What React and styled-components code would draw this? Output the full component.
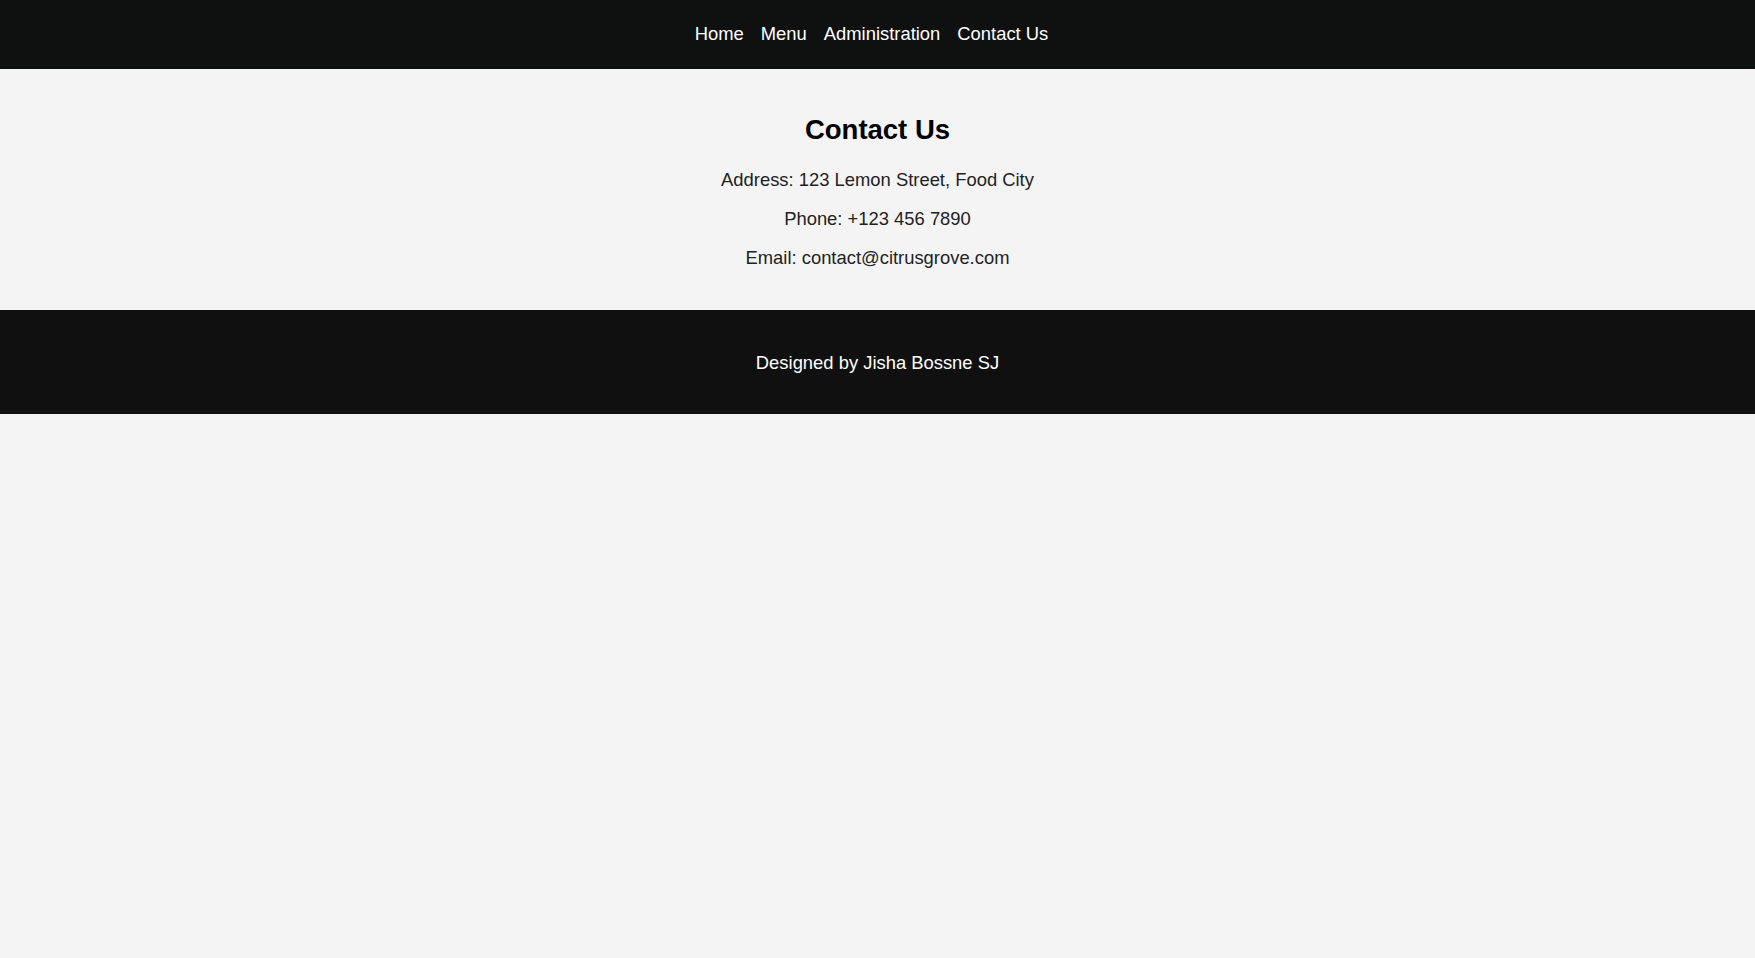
import React from 'react';
import styled, { createGlobalStyle } from 'styled-components';

const GlobalStyle = createGlobalStyle`
  html, body {
    margin: 0;
    padding: 0;
    background: #f4f4f4;
    font-family: "Liberation Sans", Arial, sans-serif;
    font-size: 18.4px;
    line-height: 21px;
  }
`;

const Navbar = styled.nav`
  background: #0f1111;
  padding: 23px 12px 25px 0;
  display: flex;
  justify-content: center;
  gap: 17px;
`;

const NavLink = styled.a`
  color: #ffffff;
  text-decoration: none;
`;

const ContactSection = styled.section`
  padding: 22px 20px 24px;
  text-align: center;
  color: #222;
`;

const Title = styled.h2`
  font-size: 27.5px;
  line-height: 32px;
  font-weight: 700;
  color: #000;
  margin: 22.5px 0 23.5px;
`;

const Line = styled.p`
  margin: 18px 0;
`;

const Footer = styled.footer`
  background: #101010;
  color: #fff;
  text-align: center;
  padding: 23.5px 0;

  p {
    margin: 18px 0;
  }
`;

const links = ['Home', 'Menu', 'Administration', 'Contact Us'];

export default function App() {
  return (
    <>
      <GlobalStyle />
      <Navbar>
        {links.map((l) => (
          <NavLink key={l} href="#">
            {l}
          </NavLink>
        ))}
      </Navbar>
      <ContactSection>
        <Title>Contact Us</Title>
        <Line>Address: 123 Lemon Street, Food City</Line>
        <Line>Phone: +123 456 7890</Line>
        <Line>Email: contact@citrusgrove.com</Line>
      </ContactSection>
      <Footer>
        <p>Designed by Jisha Bossne SJ</p>
      </Footer>
    </>
  );
}
